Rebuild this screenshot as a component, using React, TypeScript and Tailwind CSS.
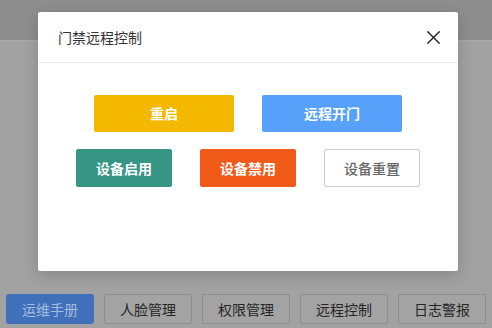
import { X } from 'lucide-react';

const topRow = [
  { label: '重启', cls: 'bg-[#f5b800] text-white' },
  { label: '远程开门', cls: 'bg-[#57a1fb] text-white' },
];

const bottomRow = [
  { label: '设备启用', cls: 'bg-[#369585] text-white border border-[#369585]' },
  { label: '设备禁用', cls: 'bg-[#f15a18] text-white border border-[#f15a18]' },
  { label: '设备重置', cls: 'bg-white text-[#666] border border-[#ccc] font-medium' },
];

const tabs = ['运维手册', '人脸管理', '权限管理', '远程控制', '日志警报'];

export default function App() {
  return (
    <div
      className="relative w-[492px] h-[328px] overflow-hidden bg-[#a2a2a2] flex flex-col"
      style={{ fontFamily: '"Noto Sans CJK SC", "Noto Sans", sans-serif' }}
    >
      {/* page behind the overlay */}
      <div className="h-[41px] bg-[#8e8e8e] border-b border-[#a9a9a9] shrink-0" />
      <div className="flex-1" />
      <div className="flex gap-[10px] px-[6px] pb-[4px]">
        {tabs.map((t, i) => (
          <div
            key={t}
            className={
              i === 0
                ? 'w-[88px] h-[30px] rounded-[3px] bg-[#3f70b9] text-[#a6bde0] text-[14px] flex items-center justify-center'
                : 'w-[88px] h-[30px] rounded-[2px] bg-[#a3a3a3] border border-[#8f8f8f] text-[#262626] text-[14px] flex items-center justify-center'
            }
          >
            {t}
          </div>
        ))}
      </div>

      {/* dialog */}
      <div className="absolute left-[38px] top-[12px] w-[420px] h-[259px] bg-white rounded-[2px] shadow-[0_4px_16px_rgba(0,0,0,0.18)]">
        <div className="h-[51px] border-b border-[#ebebeb] flex items-center justify-between pl-[20px] pr-[13px]">
          <span className="text-[14px] text-[#333]">门禁远程控制</span>
          <X size={23} strokeWidth={1.4} className="text-[#222]" />
        </div>
        <div className="flex flex-col items-center pt-[32px] gap-[17px]">
          <div className="flex gap-[28px]">
            {topRow.map((b) => (
              <div
                key={b.label}
                className={`w-[140px] h-[37px] rounded-[2px] flex items-center justify-center text-[14px] font-bold ${b.cls}`}
              >
                {b.label}
              </div>
            ))}
          </div>
          <div className="flex gap-[28px]">
            {bottomRow.map((b) => (
              <div
                key={b.label}
                className={`w-[96px] h-[38px] rounded-[2px] flex items-center justify-center text-[14px] font-bold ${b.cls}`}
              >
                {b.label}
              </div>
            ))}
          </div>
        </div>
      </div>
    </div>
  );
}
